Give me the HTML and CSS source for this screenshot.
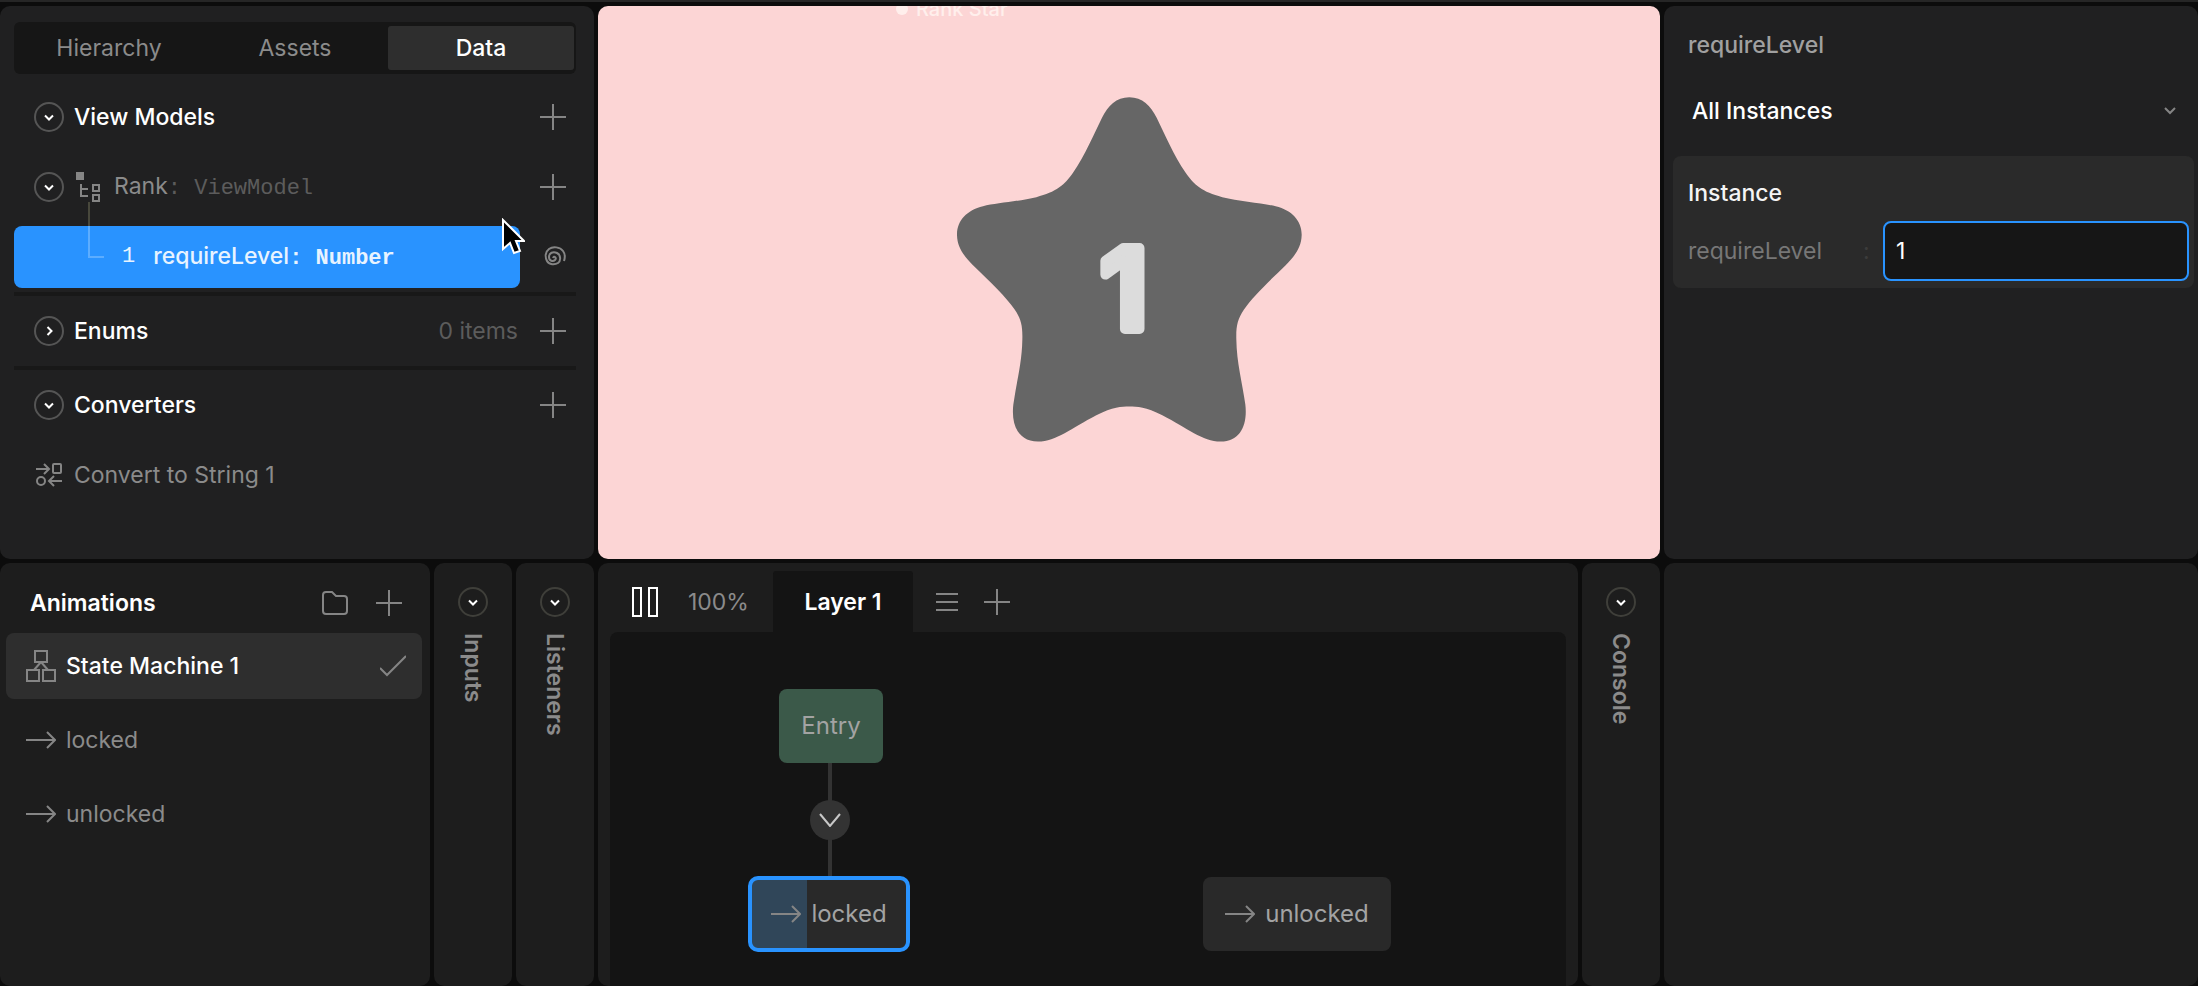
FILE: index.html
```html
<!DOCTYPE html>
<html lang="en">
  <head>
    <meta charset="UTF-8" />
    <meta name="viewport" content="width=device-width, initial-scale=1.0" />
    <title>Rank Star</title>
    <link rel="stylesheet" href="styles.css">
  </head>
  <body>
    <!-- shared icons -->
    <svg class="sprite" aria-hidden="true">
      <symbol id="down" viewBox="0 0 30 30">
        <circle class="ring" cx="15" cy="15" r="14" />
        <path class="mark" d="M11 13.5l4 4 4-4" />
      </symbol>
      <symbol id="right" viewBox="0 0 30 30">
        <circle class="ring" cx="15" cy="15" r="14" />
        <path class="mark" d="M13.5 11l4 4-4 4" />
      </symbol>
      <symbol id="plus" viewBox="0 0 26 26">
        <path d="M13 0v26M0 13h26" />
      </symbol>
      <symbol id="arrow" viewBox="0 0 30 18">
        <path d="M0 9h29M21 1l8 8-8 8" />
      </symbol>
    </svg>

    <div class="editor">
      <div class="row top-row">
        <section class="panel data-panel">
          <div class="tabs">
            <button class="tab">Hierarchy</button>
            <button class="tab">Assets</button>
            <button class="tab active">Data</button>
          </div>

          <div class="item">
            <button class="icon-btn" aria-label="Collapse"><svg class="toggle"><use href="#down" /></svg></button>
            <span class="heading">View Models</span>
            <button class="icon-btn add" aria-label="Add"><svg class="plus"><use href="#plus" /></svg></button>
          </div>
          <div class="item">
            <button class="icon-btn" aria-label="Collapse"><svg class="toggle"><use href="#down" /></svg></button>
            <svg class="model-icon" viewBox="0 0 26 32">
              <rect class="fill" x="2" y="1" width="8" height="8" />
              <path d="M7 13v12h7M7 18h7" />
              <rect x="19" y="14" width="6" height="6" />
              <rect x="19" y="24" width="6" height="6" />
            </svg>
            <span class="name">Rank<span class="mono">: ViewModel</span></span>
            <button class="icon-btn add" aria-label="Add"><svg class="plus"><use href="#plus" /></svg></button>
          </div>
          <div class="item property">
            <div class="selected">
              <span class="mono">1</span>
              <span class="name">requireLevel<span class="mono bold">: Number</span></span>
            </div>
            <svg class="branch" viewBox="0 0 16 56">
              <path d="M1 0v24" />
              <path class="light" d="M1 24v31h15" />
            </svg>
            <button class="icon-btn add" aria-label="Bindings">
              <svg class="spiral" viewBox="0 0 26 26">
                <path d="M13 14c1-3 4 0 2 2s-6 1-6-3 4-6 8-4 4 8 1 10-9 2-11-2-2-9 2-12 11-2 14 2 2 7 1 10" />
              </svg>
            </button>
            <svg class="cursor" viewBox="0 0 24 38">
              <path d="M2 2v29l7-6 4 10 6-2-4-10h8z" />
            </svg>
          </div>
          <hr />
          <div class="item">
            <button class="icon-btn" aria-label="Expand"><svg class="toggle"><use href="#right" /></svg></button>
            <span class="heading">Enums</span>
            <span class="count">0 items</span>
            <button class="icon-btn add" aria-label="Add"><svg class="plus"><use href="#plus" /></svg></button>
          </div>
          <hr />
          <div class="item">
            <button class="icon-btn" aria-label="Collapse"><svg class="toggle"><use href="#down" /></svg></button>
            <span class="heading">Converters</span>
            <button class="icon-btn add" aria-label="Add"><svg class="plus"><use href="#plus" /></svg></button>
          </div>
          <div class="item">
            <svg class="convert-icon" viewBox="0 0 30 26">
              <path d="M2 7h13M10 2l5 5-5 5M28 19H15M20 14l-5 5 5 5" />
              <rect x="19" y="2" width="8" height="9" rx="1" />
              <circle cx="7" cy="19" r="4" />
            </svg>
            <span class="name">Convert to String 1</span>
          </div>
        </section>

        <main class="stage">
          <div class="artboard-name"><span class="dot"></span>Rank Star</div>
          <svg class="star" viewBox="234 293 1035 1034">
            <path d="M751 293C790 293 815 318 833 355C855 400 885 470 920 520C945 556 970 578 1030 593C1080 605 1150 611 1190 620C1240 632 1269 665 1268 707C1267 745 1245 772 1220 797C1170 845 1120 893 1095 930C1075 960 1071 980 1072 1020C1073 1090 1090 1150 1099 1215C1106 1275 1085 1326 1025 1326C970 1326 925 1285 850 1247C800 1222 775 1221 751 1221C727 1221 702 1222 652 1247C577 1285 532 1326 477 1326C417 1326 396 1275 403 1215C412 1150 429 1090 430 1020C431 980 427 960 407 930C382 893 332 845 282 797C257 772 235 745 234 707C233 665 262 632 312 620C352 611 422 605 472 593C532 578 557 556 582 520C617 470 647 400 669 355C687 318 712 293 751 293Z" />
            <text x="735" y="988">1</text>
          </svg>
        </main>

        <aside class="panel inspector">
          <h2>requireLevel</h2>
          <div class="picker">
            <select aria-label="Instances">
              <option>All Instances</option>
            </select>
            <svg class="caret" viewBox="0 0 12 8"><path d="M1 1l5 5 5-5" /></svg>
          </div>
          <div class="card">
            <h3>Instance</h3>
            <div class="field">
              <label for="level">requireLevel</label>
              <span class="colon">:</span>
              <input id="level" type="text" value="1" />
            </div>
          </div>
        </aside>
      </div>

      <div class="row bottom-row">
        <div class="dock">
          <section class="panel animations">
            <div class="panel-head">
              <h2>Animations</h2>
              <button class="icon-btn" aria-label="New folder">
                <svg class="folder" viewBox="0 0 26 24">
                  <path d="M1 4q0-3 3-3h6l4 4h8q3 0 3 3v12q0 3-3 3H4q-3 0-3-3z" />
                </svg>
              </button>
              <button class="icon-btn" aria-label="Add"><svg class="plus"><use href="#plus" /></svg></button>
            </div>
            <div class="animation current">
              <svg class="machine" viewBox="0 0 30 32">
                <rect x="9" y="1" width="12" height="11" />
                <rect x="1" y="20" width="12" height="11" />
                <rect x="17" y="20" width="12" height="11" />
                <path d="M15 12l-7 8M15 12l7 8" />
              </svg>
              <span>State Machine 1</span>
              <svg class="check" viewBox="0 0 26 22"><path d="M0 13l7 7L26 1" /></svg>
            </div>
            <div class="animation">
              <svg class="arrow"><use href="#arrow" /></svg>
              <span>locked</span>
            </div>
            <div class="animation">
              <svg class="arrow"><use href="#arrow" /></svg>
              <span>unlocked</span>
            </div>
          </section>
          <section class="panel strip">
            <button class="icon-btn" aria-label="Open inputs"><svg class="toggle"><use href="#down" /></svg></button>
            <span>Inputs</span>
          </section>
          <section class="panel strip">
            <button class="icon-btn" aria-label="Open listeners"><svg class="toggle"><use href="#down" /></svg></button>
            <span>Listeners</span>
          </section>
        </div>

        <section class="panel machine-panel">
          <div class="toolbar">
            <button class="icon-btn" aria-label="Pause">
              <svg class="pause" viewBox="0 0 26 30">
                <rect x="1" y="1" width="8" height="28" />
                <rect x="17" y="1" width="8" height="28" />
              </svg>
            </button>
            <span class="speed">100%</span>
            <button class="layer">Layer 1</button>
            <button class="icon-btn" aria-label="Layers">
              <svg class="menu" viewBox="0 0 22 20"><path d="M0 2h22M0 10h22M0 18h22" /></svg>
            </button>
            <button class="icon-btn add-layer" aria-label="Add layer"><svg class="plus"><use href="#plus" /></svg></button>
          </div>
          <div class="graph">
            <div class="wire"></div>
            <div class="node entry">Entry</div>
            <div class="transition">
              <svg viewBox="0 0 22 14"><path d="M1 1l10 12L21 1" /></svg>
            </div>
            <div class="node locked">
              <svg class="arrow"><use href="#arrow" /></svg>
              <span>locked</span>
            </div>
            <div class="node unlocked">
              <svg class="arrow"><use href="#arrow" /></svg>
              <span>unlocked</span>
            </div>
          </div>
        </section>

        <section class="panel strip console">
          <button class="icon-btn" aria-label="Open console"><svg class="toggle"><use href="#down" /></svg></button>
          <span>Console</span>
        </section>
        <aside class="panel blank"></aside>
      </div>
    </div>
  </body>
</html>
```
FILE: styles.css
```css
* {
  box-sizing: border-box;
  margin: 0;
  padding: 0;
}
body {
  background-color: #0c0c0c;
  color: #8b8b8b;
  font-family: Inter, "Liberation Sans", sans-serif;
  font-size: 23px;
  line-height: 30px;
}
button,
input,
select {
  font: inherit;
  color: inherit;
  border: none;
  background: none;
}
button {
  cursor: pointer;
}
h2,
h3 {
  font-size: 23px;
  font-weight: 500;
}
svg {
  display: block;
  flex: none;
  fill: none;
  stroke: #858585;
  stroke-width: 2px;
}
.sprite {
  position: absolute;
  width: 0;
  height: 0;
}
.editor {
  height: 100vh;
  min-height: 900px;
  border-top: 2px solid #262626;
  padding-top: 4px;
  display: flex;
  flex-direction: column;
  gap: 4px;
  overflow: hidden;
}
.row {
  display: flex;
  gap: 4px;
}
.top-row {
  height: 553px;
}
.bottom-row {
  flex: 1;
  min-height: 0;
}
.panel {
  --ring: #555555;
  background-color: #1d1d1d;
  border-radius: 10px;
}
.top-row .panel {
  background-color: #202021;
}
.mono {
  font-family: "Liberation Mono", monospace;
  font-size: 22px;
}
.icon-btn {
  display: flex;
  align-items: center;
  justify-content: center;
}
.toggle {
  width: 30px;
  height: 30px;
}
.ring {
  stroke: var(--ring);
}
.mark {
  stroke: #ffffff;
}
.plus {
  width: 26px;
  height: 26px;
}
.arrow {
  width: 30px;
  height: 18px;
}

/* Data panel */
.data-panel {
  width: 594px;
  flex: none;
  padding: 16px 18px 0 14px;
}
.tabs {
  display: flex;
  height: 52px;
  margin-bottom: 8px;
  padding: 4px 2px;
  background-color: #161616;
  border-radius: 6px;
}
.tab {
  flex: 1;
  border-radius: 3px;
}
.tab.active {
  background-color: #2e2e2e;
  color: #ffffff;
  font-weight: 500;
}
.item {
  position: relative;
  display: flex;
  align-items: center;
  gap: 10px;
  height: 70px;
  padding: 0 10px 0 20px;
}
.heading {
  color: #ffffff;
  font-weight: 500;
}
.add {
  margin-left: auto;
}
.count {
  margin-left: auto;
  color: #5c5c5c;
}
.count + .add {
  margin-left: 12px;
}
.item .mono {
  color: #5c5c5c;
}
.model-icon {
  width: 26px;
  height: 32px;
  margin-right: 4px;
}
.model-icon .fill {
  fill: #858585;
  stroke: none;
}
.property {
  padding-left: 0;
}
.selected {
  display: flex;
  align-items: center;
  gap: 18px;
  width: 506px;
  height: 62px;
  padding-left: 108px;
  border-radius: 8px;
  background-color: #2993ff;
  color: #e8f3ff;
  font-weight: 500;
}
.selected .mono {
  color: #e8f3ff;
}
.selected .bold {
  font-weight: 700;
}
.branch {
  position: absolute;
  left: 74px;
  top: -20px;
  width: 16px;
  height: 56px;
  stroke: #48483c;
}
.branch .light {
  stroke: #5cadff;
}
.spiral {
  width: 26px;
  height: 26px;
}
.cursor {
  position: absolute;
  left: 487px;
  top: -4px;
  width: 24px;
  height: 38px;
  fill: #000000;
  stroke: #ffffff;
}
hr {
  height: 4px;
  border: none;
  background-color: #181818;
}
.convert-icon {
  width: 30px;
  height: 26px;
}

/* Stage */
.stage {
  position: relative;
  flex: 1;
  min-width: 0;
  padding-top: 91px;
  border-radius: 10px;
  background-color: #fcd5d5;
  overflow: hidden;
}
.artboard-name {
  position: absolute;
  left: 298px;
  top: -12px;
  display: flex;
  align-items: center;
  gap: 8px;
  color: #ffefec;
  font-size: 20px;
  font-weight: 500;
}
.dot {
  width: 12px;
  height: 12px;
  border-radius: 50%;
  background-color: #ffefec;
}
.star {
  width: 345px;
  height: 345px;
  margin: 0 auto;
  fill: #666666;
  stroke: none;
}
.star text {
  fill: #dcdcdc;
  stroke: #dcdcdc;
  stroke-width: 30px;
  stroke-linejoin: round;
  font-size: 336px;
  font-weight: 600;
  text-anchor: middle;
}

/* Inspector */
.inspector,
.blank {
  width: 534px;
  flex: none;
}
.inspector {
  padding: 24px 4px 0 9px;
}
.inspector h2 {
  padding-left: 15px;
  color: #a0a0a0;
}
.picker {
  position: relative;
  margin: 26px 0 20px;
}
.picker select {
  width: 100%;
  height: 50px;
  padding-left: 19px;
  appearance: none;
  color: #ffffff;
  font-weight: 500;
}
.caret {
  position: absolute;
  right: 18px;
  top: 21px;
  width: 12px;
  height: 8px;
}
.card {
  padding: 22px 5px 7px 15px;
  border-radius: 8px;
  background-color: #2a2a2a;
}
.card h3 {
  margin-bottom: 13px;
  color: #f4f4f4;
}
.field {
  display: flex;
  align-items: center;
}
.field label {
  width: 175px;
  color: #777777;
}
.colon {
  width: 20px;
  color: #3c3c3c;
}
.field input {
  flex: 1;
  min-width: 0;
  height: 60px;
  padding-left: 11px;
  border: 2px solid #2993ff;
  border-radius: 8px;
  background-color: #161616;
  color: #ffffff;
  outline: none;
}

/* Bottom panels */
.dock {
  display: flex;
  gap: 4px;
  width: 594px;
  flex: none;
}
.animations {
  flex: 1;
  padding: 0 8px 0 6px;
}
.panel-head {
  display: flex;
  align-items: center;
  gap: 28px;
  height: 70px;
  padding: 10px 20px 0 24px;
}
.panel-head h2 {
  flex: 1;
  color: #ffffff;
  font-weight: 600;
}
.folder {
  width: 26px;
  height: 24px;
}
.animation {
  display: flex;
  align-items: center;
  gap: 10px;
  height: 66px;
  margin-bottom: 8px;
  padding: 0 16px 0 20px;
  border-radius: 8px;
}
.current {
  background-color: #2e2e2e;
  color: #ffffff;
  font-weight: 500;
}
.machine {
  width: 30px;
  height: 32px;
}
.check {
  width: 26px;
  height: 22px;
  margin-left: auto;
}
.strip {
  --ring: #3f3f3a;
  display: flex;
  flex-direction: column;
  align-items: center;
  gap: 16px;
  width: 78px;
  flex: none;
  padding-top: 24px;
  font-weight: 600;
}
.strip span {
  writing-mode: vertical-rl;
}

/* State machine */
.machine-panel {
  display: flex;
  flex-direction: column;
  flex: 1;
  min-width: 0;
  padding: 0 12px;
}
.toolbar {
  display: flex;
  align-items: center;
  height: 69px;
  padding: 8px 0 0 22px;
}
.pause {
  width: 26px;
  height: 30px;
  stroke: #ffffff;
}
.speed {
  width: 85px;
  margin-left: 30px;
}
.layer {
  width: 140px;
  height: 61px;
  margin-right: 23px;
  border-radius: 3px 3px 0 0;
  background-color: #141414;
  color: #ffffff;
  font-weight: 600;
}
.menu {
  width: 22px;
  height: 20px;
}
.add-layer {
  margin-left: 26px;
}
.graph {
  position: relative;
  flex: 1;
  border-radius: 8px 8px 0 0;
  background-color: #141414;
  font-size: 24px;
  overflow: hidden;
}
.node {
  position: absolute;
  display: flex;
  align-items: center;
  justify-content: center;
  gap: 10px;
  height: 74px;
  border-radius: 8px;
  background-color: #292929;
  color: #a3a3a3;
}
.entry {
  left: 169px;
  top: 57px;
  width: 104px;
  background-color: #3b5949;
}
.locked {
  left: 138px;
  top: 244px;
  width: 162px;
  height: 76px;
  border: 4px solid #2993ff;
  border-radius: 10px;
  background-image: linear-gradient(to right, #304659 55px, transparent 55px);
}
.unlocked {
  left: 593px;
  top: 245px;
  width: 188px;
}
.wire {
  position: absolute;
  left: 218px;
  top: 130px;
  width: 4px;
  height: 115px;
  background-color: #333333;
}
.transition {
  position: absolute;
  left: 200px;
  top: 168px;
  display: flex;
  align-items: center;
  justify-content: center;
  width: 40px;
  height: 40px;
  border-radius: 50%;
  background-color: #333333;
}
.transition svg {
  width: 22px;
  height: 14px;
  stroke: #c8c8c8;
}
```
